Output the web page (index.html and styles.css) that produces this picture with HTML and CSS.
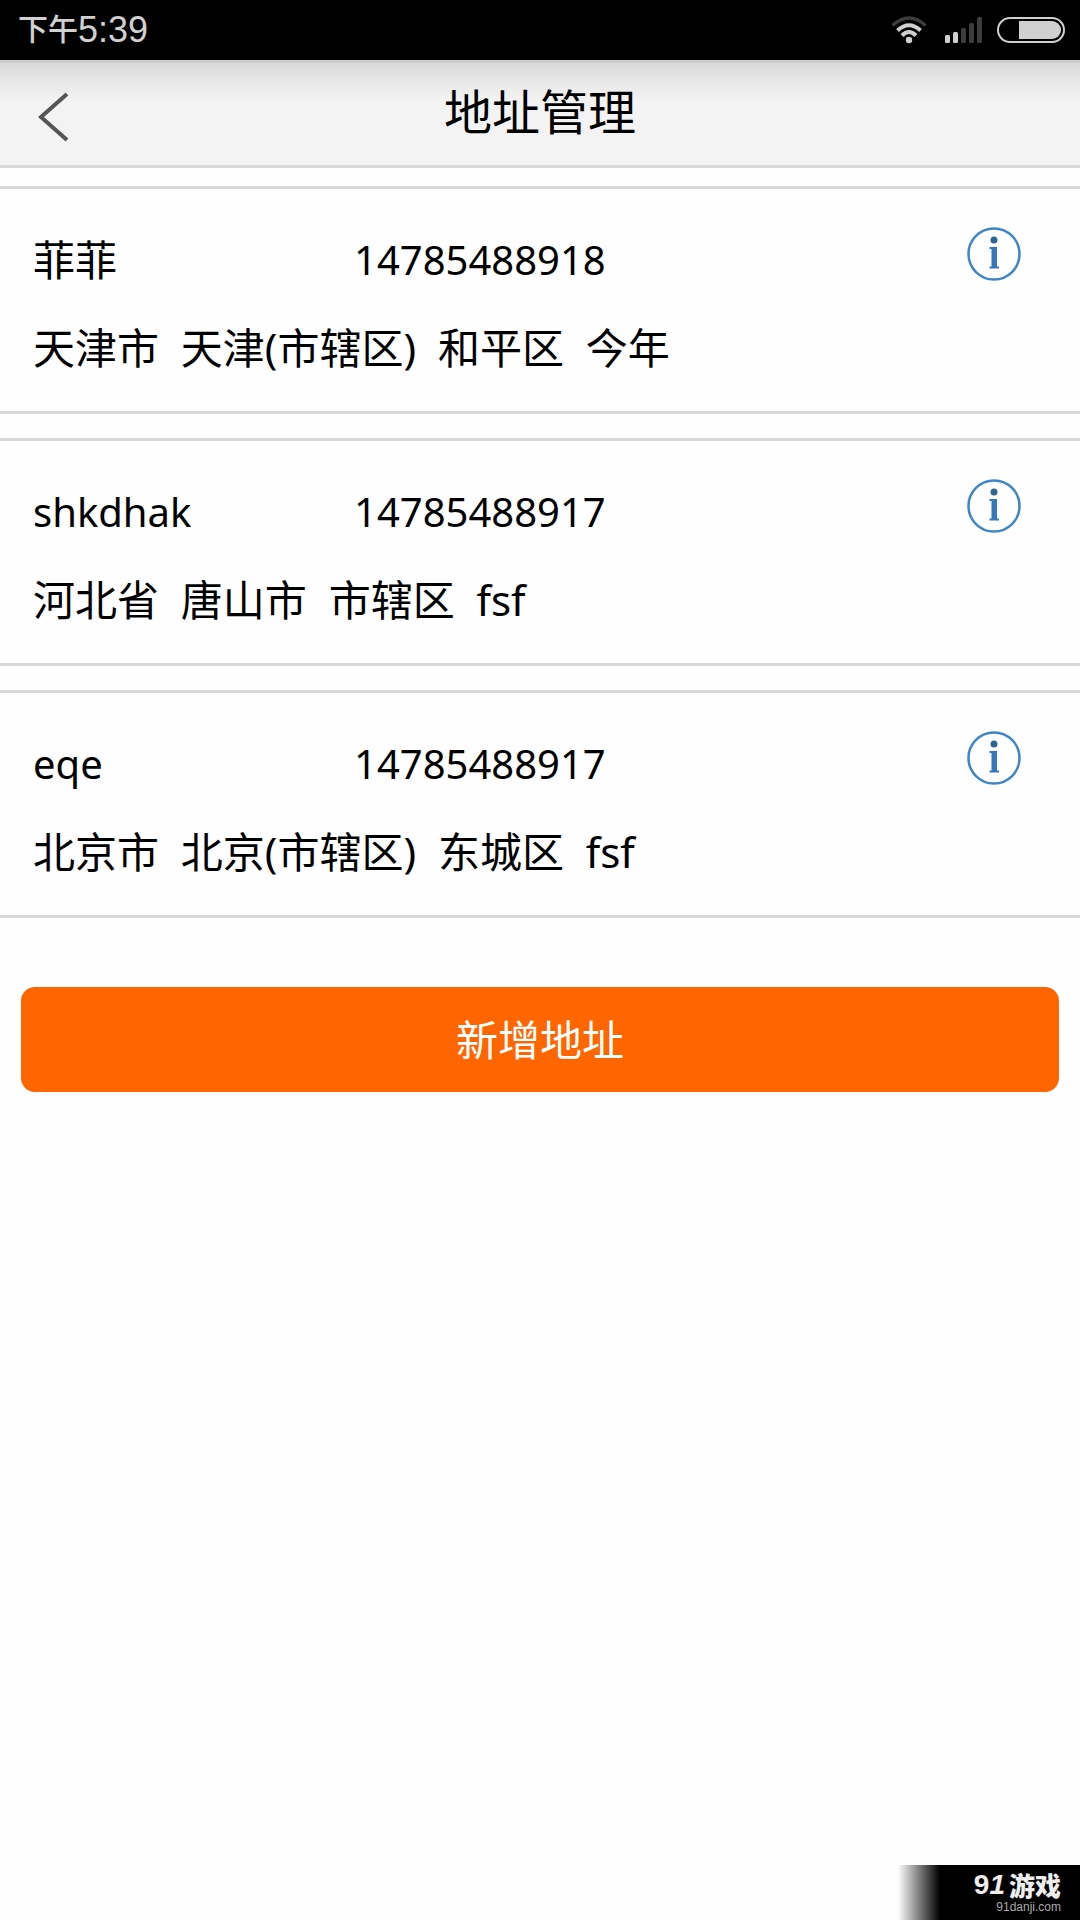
FILE: index.html
```html
<!DOCTYPE html>
<html lang="zh-CN">
<head>
<meta charset="utf-8">
<meta name="viewport" content="width=device-width, initial-scale=1">
<title>地址管理</title>
<link rel="stylesheet" href="styles.css">
</head>
<body>
<div class="status-bar">
  <div class="clock"><span class="clock-period">下午</span><span>5:39</span></div>
  <div class="status-icons">
    <svg class="icon-wifi" width="36" height="28" viewBox="0 0 36 28" fill="none" stroke="#d0d0d0" stroke-width="4" aria-hidden="true">
      <path d="M1.5 9.500Q18-5.500 34.500 9.500" stroke="#3c3c3c" stroke-width="3.500"/>
      <path d="M6.500 14.500Q18 4 29.500 14.500"/>
      <path d="M11 19.500Q18 12.500 25 19.500"/>
      <circle cx="18" cy="24" r="3.200" fill="#d0d0d0" stroke="none"/>
    </svg>
    <svg class="icon-signal" width="37" height="28" viewBox="0 0 37 28" aria-hidden="true">
      <g fill="#d0d0d0"><rect x="0" y="19" width="5" height="8" rx="1.500"/><rect x="8" y="16" width="5" height="11" rx="1.500"/></g>
      <g fill="#3c3c3c"><rect x="16" y="12" width="5" height="15" rx="1.500"/><rect x="24" y="7" width="5" height="20" rx="1.500"/><rect x="32" y="1" width="5" height="26" rx="1.500"/></g>
    </svg>
    <svg class="icon-battery" width="68" height="28" viewBox="0 0 68 28" aria-hidden="true">
      <rect x="1" y="2" width="66" height="24" rx="12" fill="none" stroke="#d0d0d0" stroke-width="2"/>
      <path d="M22 5H55a9 9 0 0 1 0 18H22Z" fill="#d0d0d0"/>
    </svg>
  </div>
</div>

<header class="title-bar">
  <button class="back" type="button" aria-label="返回">
    <svg width="32" height="50" viewBox="0 0 32 50" fill="none" stroke="#555" stroke-width="4" aria-hidden="true"><path d="M29 2L3 25L29 48"/></svg>
  </button>
  <h1 class="title">地址管理</h1>
</header>

<main class="content">
  <ul class="address-list">
    <li class="address">
      <span class="name name-cjk">菲菲</span>
      <span class="phone">14785488918</span>
      <button class="info" type="button" aria-label="详情"><svg width="54" height="54" viewBox="0 0 54 54" aria-hidden="true"><circle cx="27" cy="27" r="25.500" fill="none" stroke="#3f86c6" stroke-width="2.500"/><circle cx="27" cy="13" r="3.500" fill="#2c6791"/><path d="M22.500 20H30V39.500H32V41.500H22.500V39.500H24.500V22H22.500Z" fill="#3478bb"/></svg></button>
      <span class="place">天津市&nbsp; 天津(市辖区)&nbsp; 和平区&nbsp; 今年</span>
    </li>
    <li class="address">
      <span class="name">shkdhak</span>
      <span class="phone">14785488917</span>
      <button class="info" type="button" aria-label="详情"><svg width="54" height="54" viewBox="0 0 54 54" aria-hidden="true"><circle cx="27" cy="27" r="25.500" fill="none" stroke="#3f86c6" stroke-width="2.500"/><circle cx="27" cy="13" r="3.500" fill="#2c6791"/><path d="M22.500 20H30V39.500H32V41.500H22.500V39.500H24.500V22H22.500Z" fill="#3478bb"/></svg></button>
      <span class="place">河北省&nbsp; 唐山市&nbsp; 市辖区&nbsp; fsf</span>
    </li>
    <li class="address">
      <span class="name">eqe</span>
      <span class="phone">14785488917</span>
      <button class="info" type="button" aria-label="详情"><svg width="54" height="54" viewBox="0 0 54 54" aria-hidden="true"><circle cx="27" cy="27" r="25.500" fill="none" stroke="#3f86c6" stroke-width="2.500"/><circle cx="27" cy="13" r="3.500" fill="#2c6791"/><path d="M22.500 20H30V39.500H32V41.500H22.500V39.500H24.500V22H22.500Z" fill="#3478bb"/></svg></button>
      <span class="place">北京市&nbsp; 北京(市辖区)&nbsp; 东城区&nbsp; fsf</span>
    </li>
  </ul>
  <button class="add" type="button">新增地址</button>
</main>

<footer class="brand">
  <div class="brand-name"><span class="brand-mark">9<i>1</i></span><span>游戏</span></div>
  <div class="brand-site">91danji.com</div>
</footer>
</body>
</html>
```

FILE: styles.css
```css
* {
  box-sizing: border-box;
}

body {
  margin: 0;
  min-height: 100vh;
  display: flex;
  flex-direction: column;
  background: #fefefe;
  color: #000;
  font-family: "Noto Sans", "Noto Sans CJK SC", sans-serif;
}

button {
  padding: 0;
  border: 0;
  background: none;
  font: inherit;
  color: inherit;
  cursor: pointer;
}

svg {
  display: block;
}

.status-bar {
  height: 60px;
  padding: 0 15px 0 18px;
  display: flex;
  align-items: center;
  justify-content: space-between;
  background: #000;
  color: #d0d0d0;
}

.clock {
  display: flex;
  align-items: center;
  font: 36px/40px "Liberation Sans", "Noto Sans CJK SC", sans-serif;
}

.clock-period {
  font-size: 30px;
  font-weight: 500;
}

.status-icons {
  display: flex;
  align-items: center;
}

.icon-signal {
  margin-left: 18px;
}

.icon-battery {
  margin-left: 15px;
}

.title-bar {
  height: 108px;
  padding: 0 38px;
  display: grid;
  grid-template-columns: 40px 1fr 40px;
  align-items: center;
  border-top: 3px solid #ccc;
  border-bottom: 3px solid #d9d9d9;
  background: linear-gradient(#d9d9d9, #e6e6e6 16px, #f3f3f3 38px);
}

.back {
  padding-top: 6px;
}

.title {
  margin: 0;
  padding-bottom: 4px;
  text-align: center;
  font-size: 48px;
  line-height: 64px;
  font-weight: 400;
}

.content {
  flex: 1;
  padding-top: 18px;
}

.address-list {
  margin: 0;
  padding: 0;
  list-style: none;
  display: grid;
  gap: 24px;
}

.address {
  height: 228px;
  padding: 27px 59px 0 33px;
  display: grid;
  grid-template-columns: 321px 1fr 54px;
  grid-template-rows: 88px 88px;
  align-items: center;
  border-top: 3px solid #d9d9d9;
  border-bottom: 3px solid #d9d9d9;
  font-size: 42px;
  line-height: 60px;
}

.name,
.phone {
  font-size: 40px;
}

.name-cjk {
  font-size: 42px;
}

.info {
  align-self: start;
  padding-top: 11px;
}

.place {
  grid-column: 1 / -1;
}

.add {
  display: block;
  width: calc(100% - 42px);
  height: 105px;
  margin: 69px 21px 0;
  border-radius: 14px;
  background: #f60;
  color: #fff;
  font-size: 42px;
  line-height: 60px;
}

.brand {
  align-self: flex-end;
  width: 182px;
  height: 55px;
  padding: 4px 19px 0 0;
  background: linear-gradient(90deg, #fefefe, #000 42px);
  color: #eee;
  text-align: right;
}

.brand-name {
  display: flex;
  justify-content: flex-end;
  align-items: center;
  gap: 4px;
  font: 900 26px/32px "Noto Sans CJK SC", sans-serif;
}

.brand-mark {
  font-family: "Liberation Sans", sans-serif;
  font-size: 28px;
}

.brand-site {
  color: #aaa;
  font: 12px/12px "Liberation Sans", sans-serif;
}
```
